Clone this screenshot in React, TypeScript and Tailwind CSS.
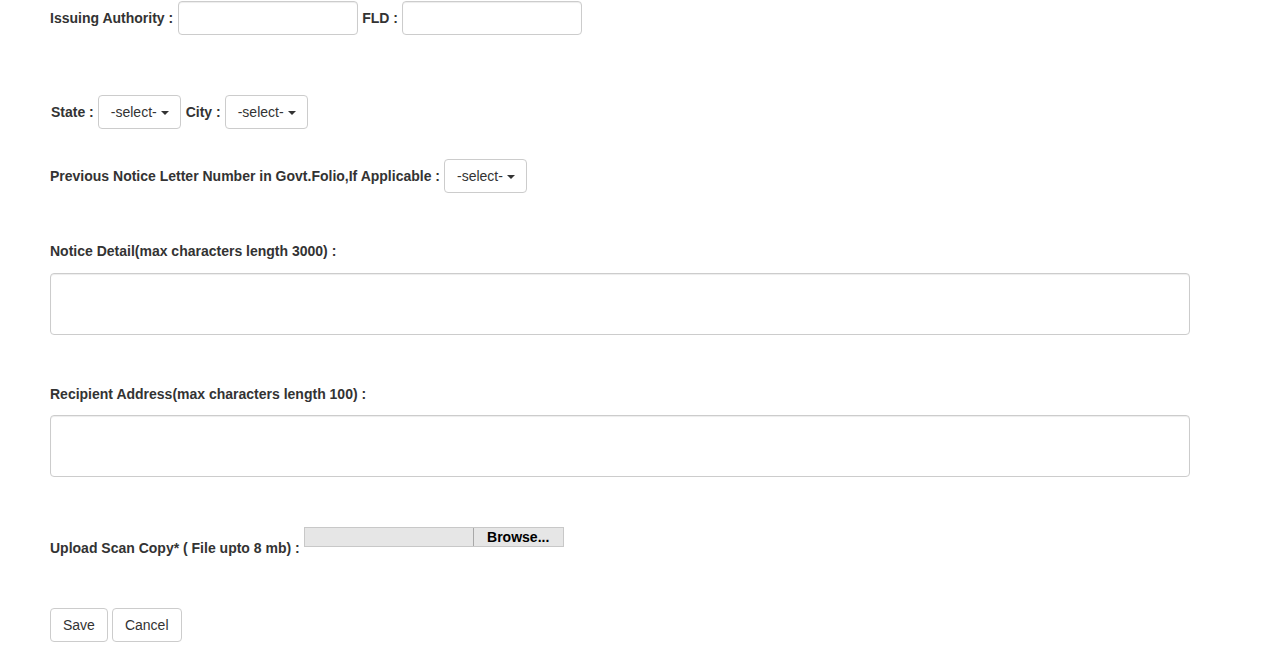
const font = { fontFamily: '"Liberation Sans", Arial, sans-serif' };

const Label = ({ children }: { children: React.ReactNode }) => (
  <span className="block text-[14px] leading-[20px] font-bold text-[#333]">{children}</span>
);

const TextInput = () => (
  <div className="h-[34px] w-[180px] rounded-[4px] border border-[#ccc] bg-white shadow-[inset_0_1px_1px_rgba(0,0,0,0.075)]" />
);

const SelectButton = () => (
  <div className="flex h-[34px] items-center gap-[4px] rounded-[4px] border border-[#ccc] bg-white pl-[12px] pr-[11px] text-[14px] text-[#333]">
    <span>-select-</span>
    <span className="mt-[2px] h-0 w-0 border-x-[4px] border-t-[4px] border-x-transparent border-t-[#333]" />
  </div>
);

const TextArea = () => (
  <div className="h-[62px] w-[1140px] rounded-[4px] border border-[#ccc] bg-white shadow-[inset_0_1px_1px_rgba(0,0,0,0.075)]" />
);

const Button = ({ children }: { children: React.ReactNode }) => (
  <div className="flex h-[34px] items-center rounded-[4px] border border-[#ccc] bg-white px-[12px] text-[14px] text-[#333]">
    {children}
  </div>
);

export default function App() {
  return (
    <div className="min-h-[653px] bg-white pl-[50px] pt-[1px]" style={font}>
      <div className="flex items-center gap-[4px]">
        <Label>Issuing Authority :</Label>
        <div className="ml-[1px]">
          <TextInput />
        </div>
        <Label>FLD :</Label>
        <TextInput />
      </div>

      <div className="mt-[60px] flex items-center gap-[4px] pl-[1px]">
        <Label>State :</Label>
        <SelectButton />
        <span className="ml-[1px]">
          <Label>City :</Label>
        </span>
        <SelectButton />
      </div>

      <div className="mt-[30px] flex items-center gap-[4px]">
        <Label>Previous Notice Letter Number in Govt.Folio,If Applicable :</Label>
        <SelectButton />
      </div>

      <div className="mt-[48px]">
        <Label>Notice Detail(max characters length 3000) :</Label>
      </div>
      <div className="mt-[12px]">
        <TextArea />
      </div>

      <div className="mt-[49px]">
        <Label>Recipient Address(max characters length 100) :</Label>
      </div>
      <div className="mt-[11px]">
        <TextArea />
      </div>

      <div className="mt-[50px] flex items-start gap-[4px]">
        <span className="mt-[11px]">
          <Label>Upload Scan Copy* ( File upto 8 mb) :</Label>
        </span>
        <div className="flex h-[20px] w-[260px] border border-[#c8c8c8] bg-[#e6e6e6]">
          <div className="flex-1" />
          <div className="flex w-[90px] items-center justify-center border-l border-[#a8a8a8] bg-[#e6e6e6] text-[14px] font-bold text-black">
            Browse...
          </div>
        </div>
      </div>

      <div className="mt-[50px] flex gap-[4px]">
        <Button>Save</Button>
        <Button>Cancel</Button>
      </div>
    </div>
  );
}
